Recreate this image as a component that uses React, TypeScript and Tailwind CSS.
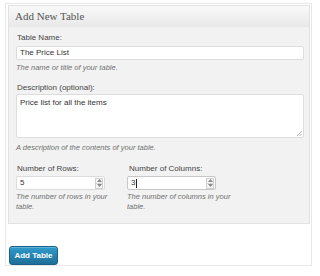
import React from "react";

const sans = { fontFamily: '"Liberation Sans", Arial, sans-serif' } as const;

function Spinner() {
  return (
    <div className="flex flex-col w-[8px] h-[11px] border border-[#cfcfcf] bg-[#f4f4f4] mr-[1px]">
      <div className="flex-1 flex items-center justify-center border-b border-[#d8d8d8]">
        <svg width="5" height="3" viewBox="0 0 5 3"><path d="M0 3 L2.5 0 L5 3 Z" fill="#888" /></svg>
      </div>
      <div className="flex-1 flex items-center justify-center">
        <svg width="5" height="3" viewBox="0 0 5 3"><path d="M0 0 L2.5 3 L5 0 Z" fill="#888" /></svg>
      </div>
    </div>
  );
}

export default function App() {
  return (
    <div className="w-[320px] h-[276px] bg-white pt-[3px] pl-[5px]" style={sans}>
      <div className="w-[307px] h-[263px] border border-[#e8e8e8] bg-white">
        <div className="ml-[2px] mt-[1px] w-[302px] border border-[#e2e2e2] bg-[#f2f2f2]">
          <div
            className="h-[21px] flex items-center pl-[6px] bg-gradient-to-b from-[#f9f9f9] to-[#e8e8e8] text-[11px] text-[#555]"
            style={{ fontFamily: '"Liberation Serif", "Times New Roman", serif' }}
          >
            Add New Table
          </div>
          <div className="pl-[7px] pr-[5px] pt-[6px] pb-[11px] flex flex-col">
            <div className="h-[10px] leading-[10px] text-[8px] text-[#444] pl-[1px]">Table Name:</div>
            <div className="mt-[3px] h-[14px] w-[288px] border border-[#dcdcdc] bg-white rounded-[2px] flex items-center pl-[3px] text-[8px] text-[#333]">
              The Price List
            </div>
            <div className="mt-[3px] h-[10px] leading-[10px] text-[7.5px] italic text-[#707070]">The name or title of your table.</div>
            <div className="mt-[10px] h-[10px] leading-[10px] text-[8px] text-[#444] pl-[1px]">Description (optional):</div>
            <div className="relative mt-[1px] h-[44px] w-[288px] border border-[#dcdcdc] bg-white rounded-[2px] pl-[3px] pt-[3px] text-[8px] leading-[10px] text-[#333]">
              Price list for all the items
              <svg className="absolute right-[1px] bottom-[1px]" width="6" height="6" viewBox="0 0 6 6">
                <path d="M6 1 L1 6 M6 3.5 L3.5 6" stroke="#aaa" strokeWidth="0.8" />
              </svg>
            </div>
            <div className="mt-[5px] h-[10px] leading-[10px] text-[7.5px] italic text-[#707070]">A description of the contents of your table.</div>
            <div className="mt-[11px] grid grid-cols-[112px_112px]">
              <div className="flex flex-col">
                <div className="h-[10px] leading-[10px] text-[8px] text-[#444] pl-[1px]">Number of Rows:</div>
                <div className="mt-[2px] h-[14px] w-[89px] border border-[#dcdcdc] bg-white rounded-[2px] flex items-center justify-between pl-[3px] text-[8px] text-[#333]">
                  <span>5</span>
                  <Spinner />
                </div>
                <div className="mt-[2px] w-[104px] text-[7.5px] leading-[10px] italic text-[#707070]">The number of rows in your table.</div>
              </div>
              <div className="flex flex-col -ml-[1px]">
                <div className="h-[10px] leading-[10px] text-[8px] text-[#444] pl-[2px]">Number of Columns:</div>
                <div className="mt-[2px] h-[14px] w-[89px] border border-[#c8c8c8] bg-white rounded-[2px] flex items-center justify-between pl-[3px] text-[8px] text-[#333]">
                  <span className="flex items-center">3<span className="inline-block w-[1px] h-[9px] bg-[#222] ml-[1px]" /></span>
                  <Spinner />
                </div>
                <div className="mt-[2px] w-[104px] text-[7.5px] leading-[10px] italic text-[#707070]">The number of columns in your table.</div>
              </div>
            </div>
          </div>
        </div>
        <button className="ml-[3px] mt-[22px] w-[49px] h-[19px] rounded-[3px] border border-[#1b6187] bg-gradient-to-b from-[#2f9bcc] to-[#1e6f98] text-white text-[8px] font-bold flex items-center justify-center shadow-[inset_0_1px_0_rgba(255,255,255,0.25)]">
          Add Table
        </button>
      </div>
    </div>
  );
}
